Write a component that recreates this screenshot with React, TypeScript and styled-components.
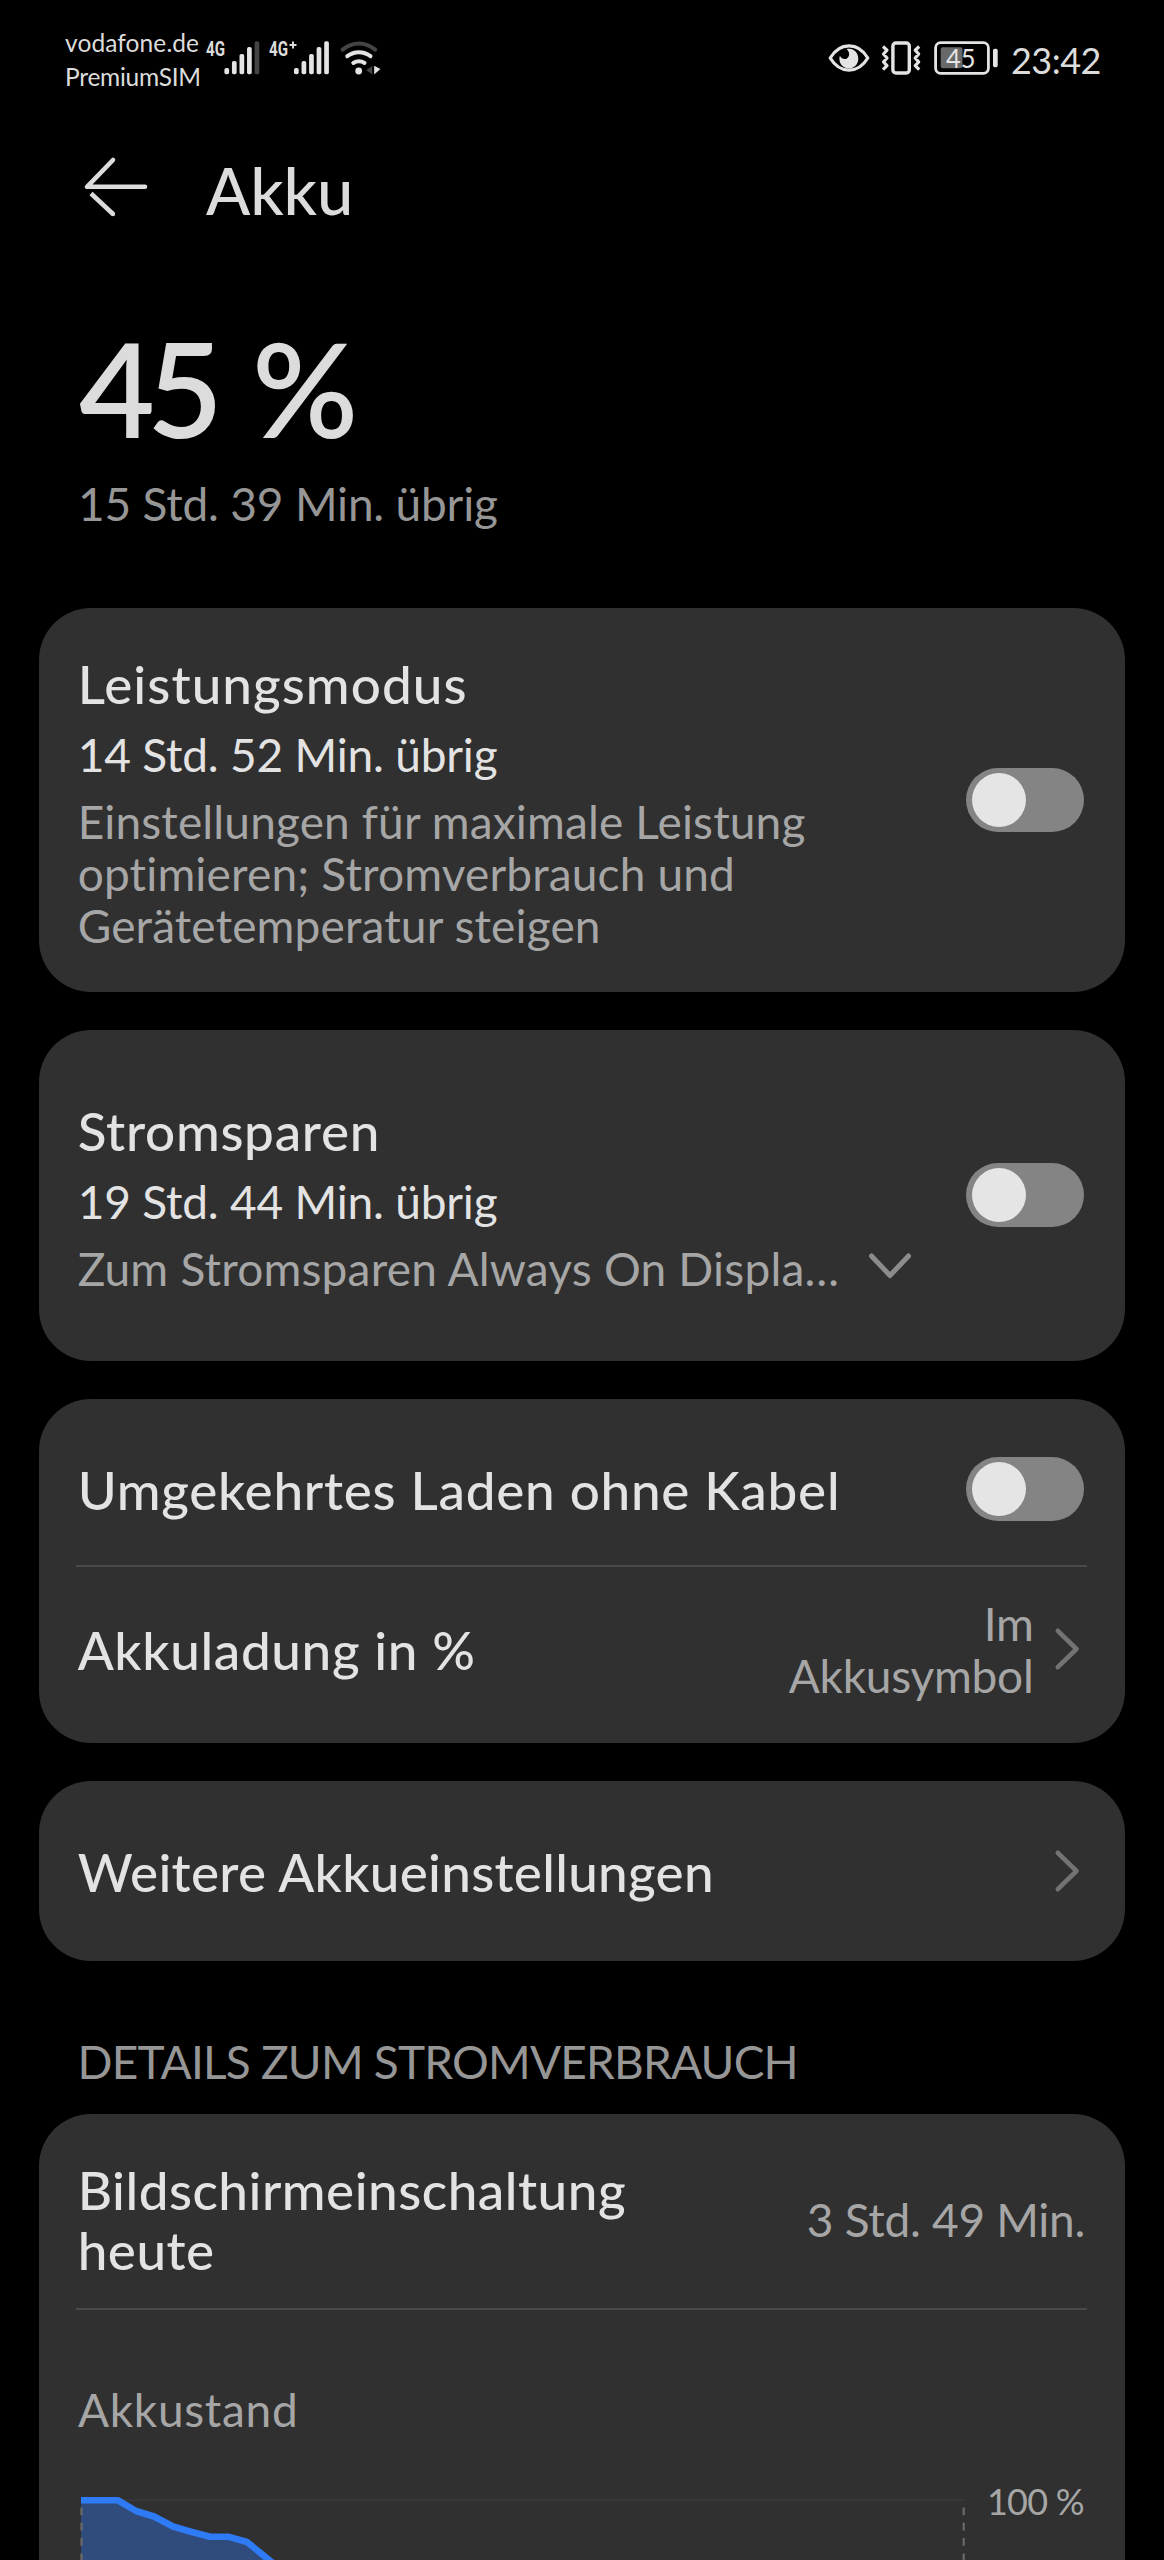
import React from "react";
import styled, { createGlobalStyle } from "styled-components";

const colors = {
  bg: "#000000",
  card: "#303030",
  title: "#e3e3e3",
  header: "#dcdcdc",
  muted: "#a6a6a6",
  dim: "#969696",
  line: "#4a4a4a",
  track: "#848484",
  knob: "#e5e5e5",
  blue: "#2f7bf5",
  area: "#304c7c",
};

const GlobalStyle = createGlobalStyle`
  * { box-sizing: border-box; }
  html, body { margin: 0; padding: 0; background: ${colors.bg}; }
  body { font-family: Lato, "Noto Sans", sans-serif; overflow: hidden; }
  svg { display: block; flex: none; overflow: visible; }
`;

const Screen = styled.div`
  width: 1164px;
  height: 2560px;
  overflow: hidden;
  display: flex;
  flex-direction: column;
  background: ${colors.bg};
`;

/* ---------- status bar ---------- */

const StatusBar = styled.div`
  height: 110px;
  flex: none;
  display: flex;
  justify-content: space-between;
  padding: 25px 63px 0 64px;
  color: ${colors.header};
`;

const StatusSide = styled.div`
  display: flex;
  align-items: flex-start;
  height: 68px;
`;

const Carriers = styled.div`
  width: 142px;
  padding-top: 1px;
  white-space: nowrap;
`;

const Carrier = styled.div<{ $track: number }>`
  padding-left: 1px;
  font-size: 24.5px;
  line-height: 33.6px;
  letter-spacing: ${(p) => p.$track}px;
`;

const IconSlot = styled.div<{ $left?: number }>`
  margin-left: ${(p) => p.$left ?? 0}px;
  margin-top: 16px;
`;

const Clock = styled.div`
  margin-left: 12px;
  margin-top: 14.5px;
  font-size: 36px;
  line-height: 40px;
  letter-spacing: -0.5px;
`;

const BAR_TOPS = [27, 20, 13, 6, 0.3];

function Signal({ label, labelWidth, plus, barsX, level }: {
  label: string; labelWidth: number; plus?: boolean; barsX: number; level: number;
}) {
  const w = barsX + 34;
  return (
    <svg width={w} height={34} viewBox={`0 0 ${w} 34`}>
      <text x={0} y={15} fontFamily="Roboto, sans-serif" fontWeight={700} fontSize={20.5}
        fill={colors.header} textLength={labelWidth} lengthAdjust="spacingAndGlyphs">{label}</text>
      {plus && <path d="M20.5 4h7M24 .5v7" stroke={colors.header} strokeWidth={2} />}
      {BAR_TOPS.map((t, i) => (
        <rect key={t} x={barsX + i * 7.55} y={t} width={4.7} height={33.3 - t} rx={1.8}
          fill={i < level ? "#e4e4e4" : "#444444"} />
      ))}
    </svg>
  );
}

function Wifi() {
  return (
    <svg width={42} height={34} viewBox="0 0 42 34" fill="none" strokeLinecap="round">
      <path d="M2.6 8.6C12.5 .3 25.3 .3 35.2 8.6" stroke="#444444" strokeWidth={4} />
      <path d="M7.3 15.2c7-5.2 16.2-5.2 23.2 0" stroke="#e4e4e4" strokeWidth={4} />
      <path d="M13.3 22c3.7-2.4 7.6-2.4 11.2 0" stroke="#e4e4e4" strokeWidth={4} />
      <circle cx={18.7} cy={30} r={3.4} fill="#e4e4e4" />
      <path d="M32.3 25v8.5l-6-4.2z" fill="#444444" />
      <path d="M34.2 24.8v8.6l6.2-5.4z" fill="#e4e4e4" />
    </svg>
  );
}

function Eye() {
  return (
    <svg width={42} height={34} viewBox="0 0 42 34">
      <path d="M2.2 17C7 9 14 4.9 21 4.9S35 9 39.8 17C35 25 28 29.1 21 29.1S7 25 2.2 17z"
        fill="none" stroke="#e4e4e4" strokeWidth={3.2} strokeLinejoin="round" />
      <path d="M18.6 8.1C24.6 6.3 30.3 11 30.3 17.6c0 6-4.3 9.9-9.3 9.9s-9.6-4-9.6-9.5c0-1.2.1-2.2.5-3.2 1.6 3 4.6 4 7 2.6 3.1-1.8 3-6.1-.3-9.3z"
        fill="#e4e4e4" />
    </svg>
  );
}

function Vibrate() {
  return (
    <svg width={42} height={34} viewBox="0 0 42 34" fill="none" stroke="#e4e4e4">
      <rect x={11.9} y={2} width={16.4} height={30} rx={3} strokeWidth={3.4} />
      <path d="M2 5.5l4 3.7-3.5 3.8 3.5 4-3.5 4 3.5 3.6-4 4M38.2 5.5l-4 3.7 3.5 3.8-3.5 4 3.5 4-3.5 3.6 4 4"
        strokeWidth={3.2} strokeLinejoin="round" />
    </svg>
  );
}

function BatteryIcon() {
  return (
    <svg width={65} height={34} viewBox="0 0 65 34">
      <rect x={1.6} y={1.7} width={52.8} height={30.6} rx={5} fill="none" stroke="#e4e4e4" strokeWidth={2.8} />
      <rect x={6.7} y={6.3} width={21.8} height={21} rx={2} fill="#686868" />
      <text x={12} y={27} fontFamily="Lato, sans-serif" fontSize={27.5} fill="#e4e4e4"
        textLength={29.5} lengthAdjust="spacingAndGlyphs">45</text>
      <rect x={59} y={7.7} width={4.7} height={18.6} rx={1.8} fill="#e4e4e4" />
    </svg>
  );
}

/* ---------- header ---------- */

const Header = styled.header`
  height: 160px;
  flex: none;
  display: flex;
  align-items: flex-start;
  padding: 44px 0 0 82px;
`;

const PageTitle = styled.h1`
  margin: -3.5px 0 0 56px;
  font-size: 65px;
  line-height: 78px;
  font-weight: 500;
  color: ${colors.header};
`;

const Summary = styled.section`
  height: 338px;
  flex: none;
  padding: 53px 78px 0;
`;

const Percent = styled.div`
  display: flex;
  gap: 37px;
  padding-left: 1px;
  font-size: 131px;
  line-height: 130px;
  font-weight: 600;
  letter-spacing: -8px;
  color: ${colors.header};
`;

const Remaining = styled.div`
  margin-top: 25px;
  font-size: 46px;
  line-height: 52px;
  letter-spacing: -0.2px;
  color: ${colors.dim};
`;

/* ---------- cards ---------- */

const Stack = styled.main`
  display: flex;
  flex-direction: column;
  gap: 38px;
  padding: 0 39px;
`;

const Card = styled.section<{ $h: number }>`
  height: ${(p) => p.$h}px;
  flex: none;
  display: flex;
  flex-direction: column;
  padding: 0 38px 0 37px;
  border-radius: 52px;
  background: ${colors.card};
`;

const Row = styled.div<{ $h?: number; $top?: number; $bottom?: number }>`
  ${(p) => (p.$h ? `height: ${p.$h}px;` : "flex: 1;")}
  display: flex;
  align-items: center;
  justify-content: space-between;
  padding: ${(p) => p.$top ?? 0}px 0 ${(p) => p.$bottom ?? 0}px 1.7px;
`;

const TextColumn = styled.div`
  display: flex;
  flex-direction: column;
  gap: 15px;
  padding-top: 6px;
`;

const Title = styled.div<{ $track?: number }>`
  padding-top: 3px;
  font-size: 53px;
  line-height: 60px;
  font-weight: 500;
  letter-spacing: ${(p) => p.$track ?? 0.5}px;
  color: ${colors.title};
  white-space: pre-line;

  ${TextColumn} & {
    padding-top: 0;
  }
`;

const Body = styled.div<{ $muted?: boolean; $track?: number; $align?: string }>`
  font-size: 46px;
  line-height: 52px;
  letter-spacing: ${(p) => p.$track ?? 0}px;
  text-align: ${(p) => p.$align ?? "left"};
  color: ${(p) => (p.$muted ? colors.muted : colors.title)};
  white-space: pre-line;
`;

const Expandable = styled.div`
  display: flex;
  align-items: center;
  gap: 29px;

  svg {
    margin-top: -4px;
  }
`;

const ValueGroup = styled.div`
  display: flex;
  align-items: center;
  gap: 21px;
  padding-right: 7.5px;

  ${Body} {
    padding-top: 3px;
  }
`;

const RowValue = styled(Body)`
  padding: 2px 2px 0 0;
`;

const Divider = styled.div`
  height: 2px;
  flex: none;
  background: ${colors.line};
`;

const Track = styled.button`
  width: 118px;
  height: 64px;
  flex: none;
  display: flex;
  align-items: center;
  margin: 0 3.5px 0 0;
  padding: 0 6px;
  border: 0;
  border-radius: 32px;
  background: ${colors.track};
`;

const Knob = styled.span`
  width: 54px;
  height: 54px;
  border-radius: 50%;
  background: ${colors.knob};
`;

function Toggle() {
  return <Track role="switch" aria-checked={false}><Knob /></Track>;
}

function ChevronRight() {
  return (
    <svg width={25} height={42} viewBox="0 0 25 42" fill="none" stroke="#737373" strokeWidth={4.6}
      strokeLinecap="round" strokeLinejoin="round">
      <path d="M2.8 2.8L21.5 21 2.8 39.2" />
    </svg>
  );
}

function ChevronDown() {
  return (
    <svg width={44} height={28} viewBox="0 0 44 28" fill="none" stroke="#8c8c8c" strokeWidth={5}
      strokeLinecap="round" strokeLinejoin="round">
      <path d="M3.5 3L22 22.5 40.5 3" />
    </svg>
  );
}

const SectionLabel = styled.h2`
  margin: 37px 0 -11.5px 38.5px;
  font-size: 46px;
  line-height: 52px;
  font-weight: 400;
  letter-spacing: -0.8px;
  color: ${colors.dim};
`;

/* ---------- chart ---------- */

const ChartBlock = styled.div`
  padding-top: 74px;
`;

const ChartHeading = styled(Body)`
  padding-left: 2px;
`;

const ChartRow = styled.div`
  display: flex;
  align-items: flex-start;
  padding-top: 44px;
`;

const AxisLabel = styled.div`
  margin: 1px 0 0 21px;
  font-size: 36px;
  line-height: 40px;
  letter-spacing: -0.8px;
  color: ${colors.muted};
`;

const LEVELS: [number, number][] = [
  [5, 20.3], [42, 20.3], [60, 31], [78, 36.5], [97, 46.5], [114, 51.5],
  [134, 56.8], [153, 56.8], [171, 62], [198, 84],
];

function BatteryChart() {
  const pts = LEVELS.map((p) => p.join(",")).join(" ");
  return (
    <svg width={890} height={84} viewBox="0 0 890 84" fill="none">
      <path d="M5 20.3H888" stroke="#383838" strokeWidth={2} />
      <polygon points={`${pts} 5,84`} fill={colors.area} />
      <path d="M5.5 27.5V84M887.7 27.5V84" stroke="#6a6a6a" strokeWidth={2.2} strokeDasharray="7.7 7.6" />
      <polyline points={pts} stroke={colors.blue} strokeWidth={6.6} strokeLinejoin="round" />
    </svg>
  );
}

export default function App() {
  return (
    <>
      <GlobalStyle />
      <Screen>
        <StatusBar>
          <StatusSide>
            <Carriers>
              <Carrier $track={0.1}>vodafone.de</Carrier>
              <Carrier $track={-0.25}>PremiumSIM</Carrier>
            </Carriers>
            <IconSlot><Signal label="4G" labelWidth={19} barsX={18.4} level={4} /></IconSlot>
            <IconSlot $left={11}><Signal label="4G" labelWidth={19} plus barsX={25} level={5} /></IconSlot>
            <IconSlot $left={12}><Wifi /></IconSlot>
          </StatusSide>
          <StatusSide>
            <IconSlot><Eye /></IconSlot>
            <IconSlot $left={10.5}><Vibrate /></IconSlot>
            <IconSlot $left={11}><BatteryIcon /></IconSlot>
            <Clock>23:42</Clock>
          </StatusSide>
        </StatusBar>

        <Header>
          <svg width={68} height={66} viewBox="0 0 68 66" fill="none" stroke={colors.header}
            strokeWidth={4.6} strokeLinejoin="round">
            <path d="M31 6L5 32.8H63" strokeLinecap="round" />
            <path d="M9 39.5L31 60" />
            <circle cx={31} cy={60} r={2.2} fill={colors.header} stroke="none" />
          </svg>
          <PageTitle>Akku</PageTitle>
        </Header>

        <Summary>
          <Percent><span>45</span><span>%</span></Percent>
          <Remaining>15 Std. 39 Min. übrig</Remaining>
        </Summary>

        <Stack>
          <Card $h={383.5}>
            <Row>
              <TextColumn>
                <Title $track={1.05}>Leistungsmodus</Title>
                <Body $track={-0.2}>14 Std. 52 Min. übrig</Body>
                <Body $muted $track={0.15}>
                  {"Einstellungen für maximale Leistung\noptimieren; Stromverbrauch und\nGerätetemperatur steigen"}
                </Body>
              </TextColumn>
              <Toggle />
            </Row>
          </Card>

          <Card $h={331}>
            <Row>
              <TextColumn>
                <Title $track={0.7}>Stromsparen</Title>
                <Body $track={-0.2}>19 Std. 44 Min. übrig</Body>
                <Expandable>
                  <Body $muted $track={0.2}>Zum Stromsparen Always On Displa…</Body>
                  <ChevronDown />
                </Expandable>
              </TextColumn>
              <Toggle />
            </Row>
          </Card>

          <Card $h={344}>
            <Row $h={166.5} $top={13.5}>
              <Title $track={0.75}>Umgekehrtes Laden ohne Kabel</Title>
              <Toggle />
            </Row>
            <Divider />
            <Row $bottom={12}>
              <Title $track={0.65}>Akkuladung in %</Title>
              <ValueGroup>
                <Body $muted $align="right" $track={-0.25}>{"Im\nAkkusymbol"}</Body>
                <ChevronRight />
              </ValueGroup>
            </Row>
          </Card>

          <Card $h={180}>
            <Row>
              <Title $track={0.3}>Weitere Akkueinstellungen</Title>
              <ValueGroup><ChevronRight /></ValueGroup>
            </Row>
          </Card>

          <SectionLabel>DETAILS ZUM STROMVERBRAUCH</SectionLabel>

          <Card $h={560}>
            <Row $h={194} $top={15.5}>
              <Title $track={0.5}>{"Bildschirmeinschaltung\nheute"}</Title>
              <RowValue $muted $track={-0.3}>3 Std. 49 Min.</RowValue>
            </Row>
            <Divider />
            <ChartBlock>
              <ChartHeading $muted $track={0.7}>Akkustand</ChartHeading>
              <ChartRow>
                <BatteryChart />
                <AxisLabel>100 %</AxisLabel>
              </ChartRow>
            </ChartBlock>
          </Card>
        </Stack>
      </Screen>
    </>
  );
}
